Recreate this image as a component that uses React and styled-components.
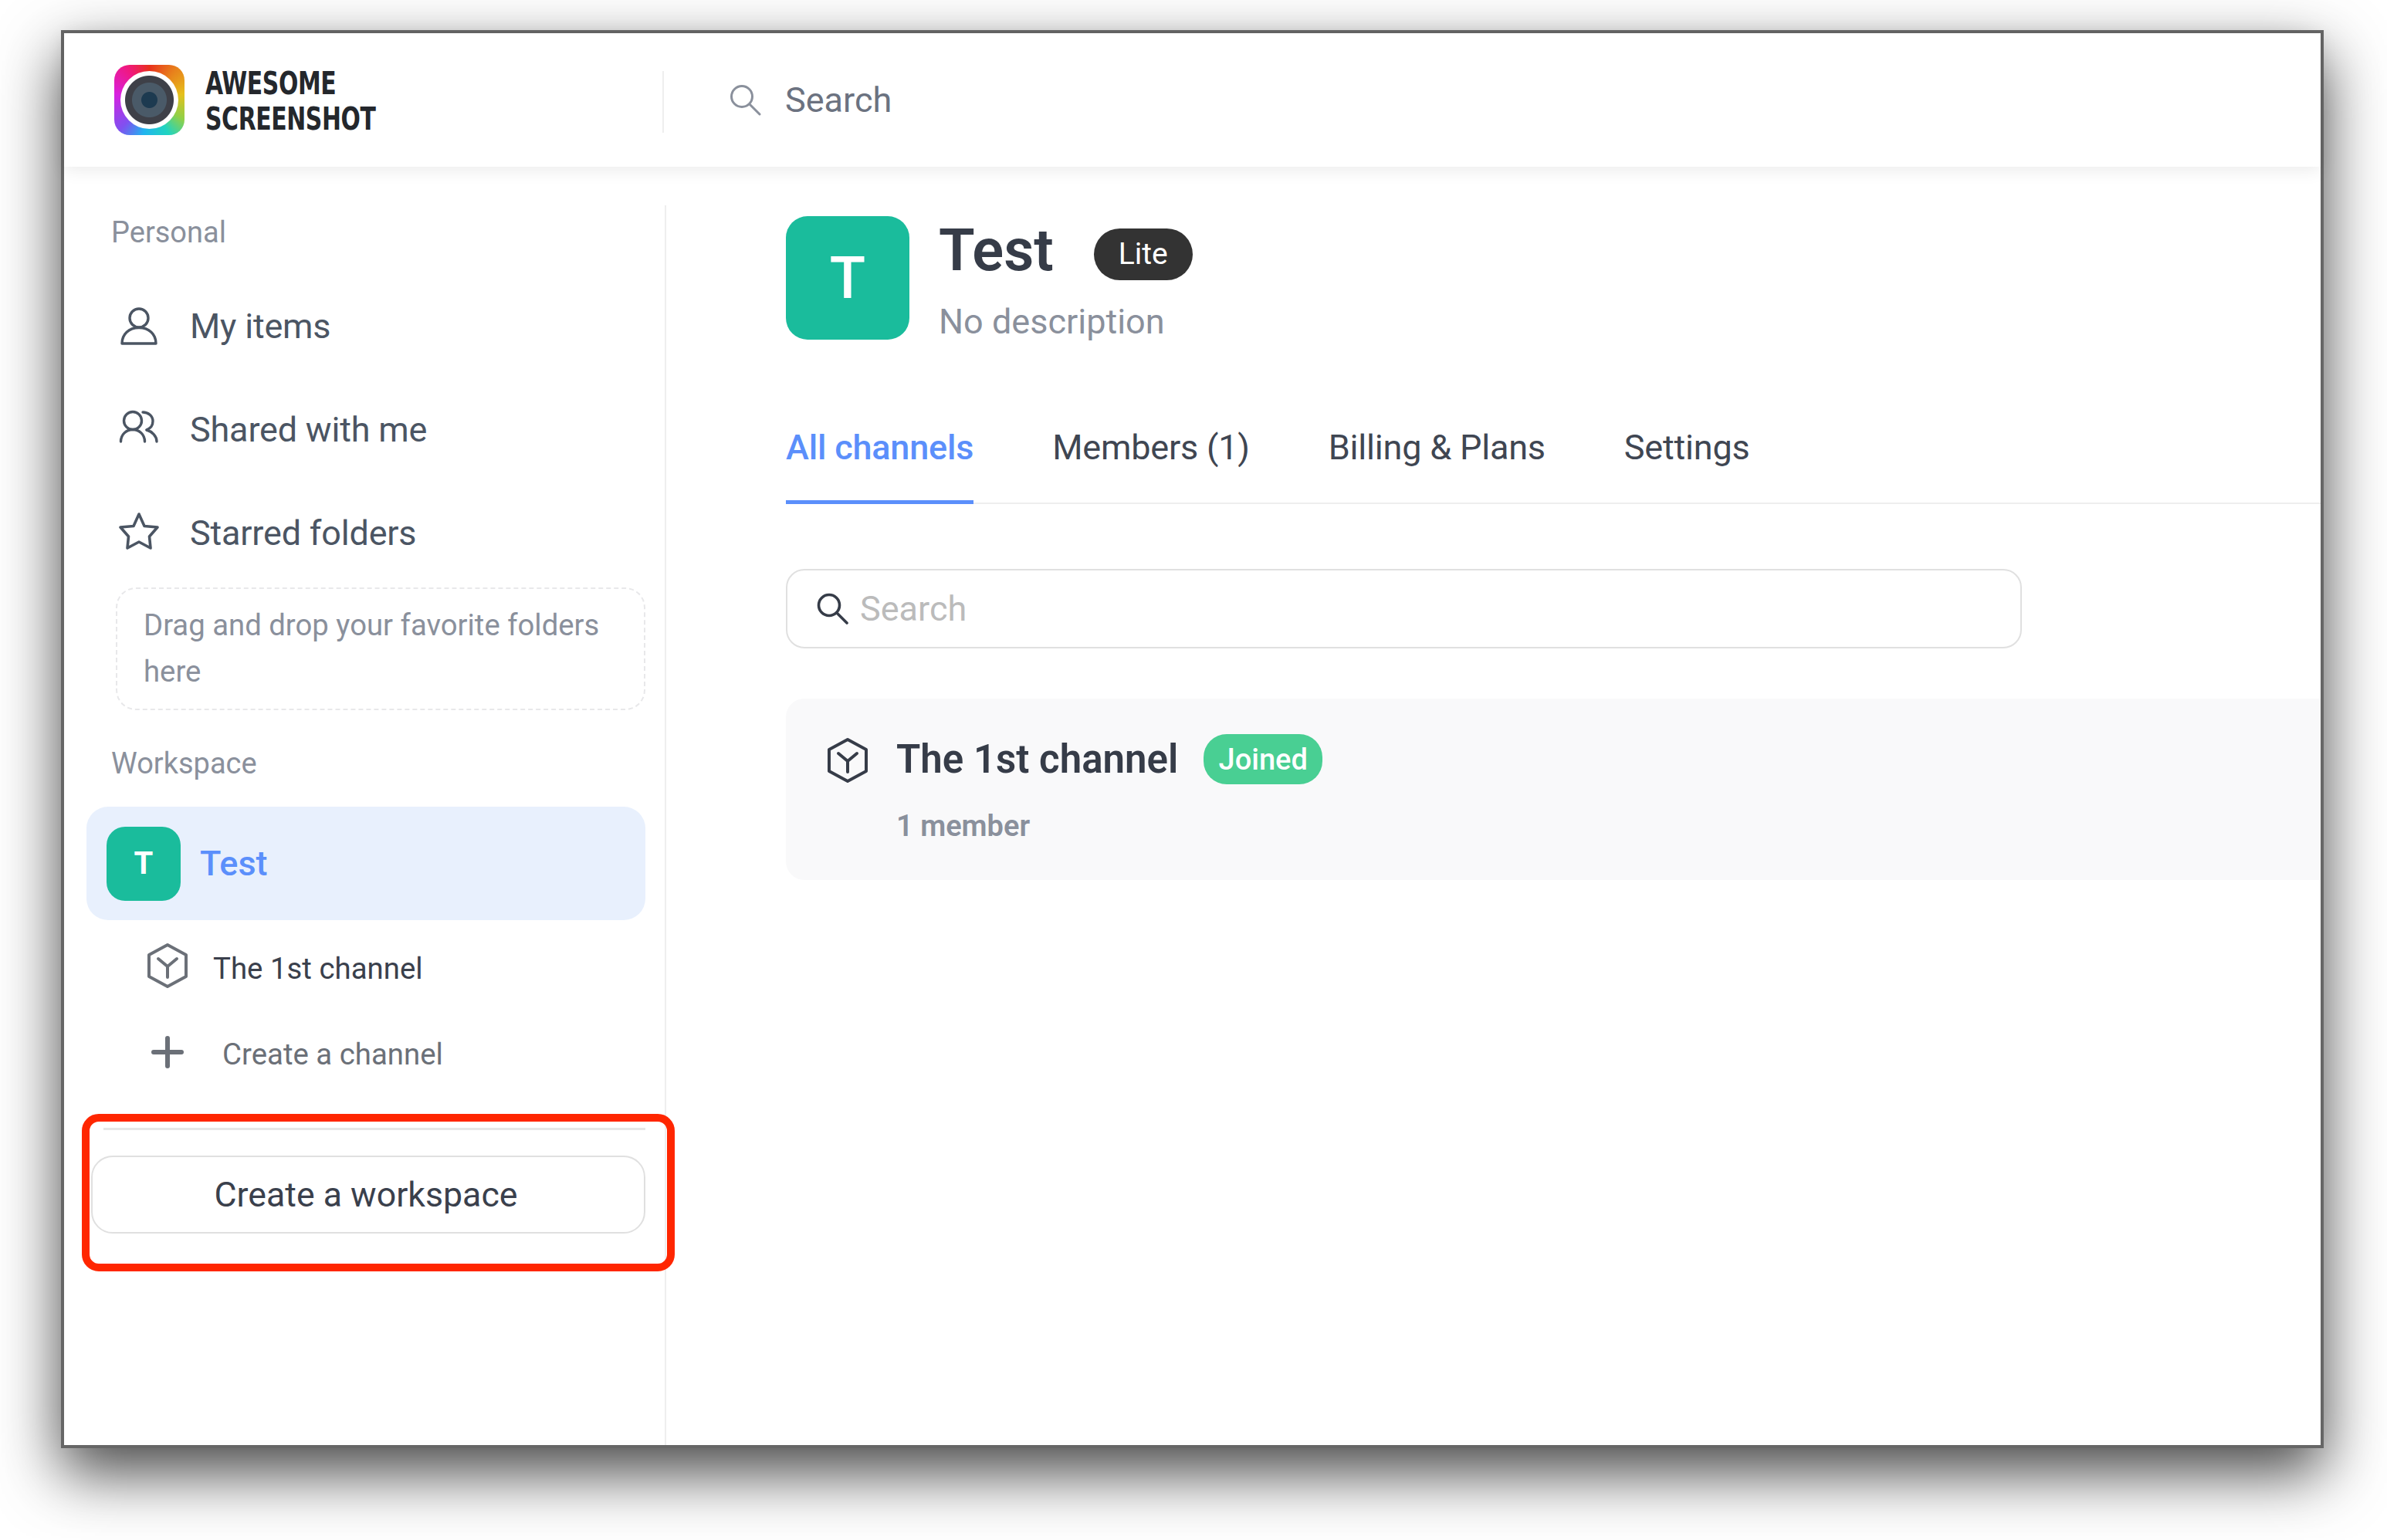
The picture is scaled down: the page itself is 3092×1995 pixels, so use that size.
import React from 'react'
import styled, { createGlobalStyle } from 'styled-components'

const GlobalStyle = createGlobalStyle`
    * { box-sizing: border-box; }
    html, body { margin: 0; padding: 0; background: #fff; }
    body { font-family: Roboto, "Liberation Sans", sans-serif; }
`

const Page = styled.div`
    width: 3092px;
    height: 1995px;
    padding: 39px 0 0 79px;
    background: #fff;
    overflow: hidden;
`
const Window = styled.div`
    width: 2931px;
    height: 1837px;
    border: 4px solid #666;
    background: #fff;
    display: flex;
    flex-direction: column;
    box-shadow: 0 32px 75px rgba(0, 0, 0, 0.72);
`
const Header = styled.header`
    height: 173px;
    flex: none;
    display: flex;
    align-items: center;
    position: relative;
    z-index: 1;
    background: #fff;
    box-shadow: 0 3px 22px rgba(0, 0, 0, 0.09);
`
const Brand = styled.div`
    width: 775px;
    padding-left: 65px;
    display: flex;
    align-items: center;
    gap: 27px;
`
const LogoMark = styled.div`
    width: 91px;
    height: 91px;
    border-radius: 20px;
    flex: none;
    display: flex;
    align-items: center;
    justify-content: center;
    background: conic-gradient(from 0deg, #e8301c, #e8801c 40deg, #e6c01c 80deg, #90d048 120deg, #20d4c0 150deg, #20b4f0 190deg, #8050f0 225deg, #d820e0 280deg, #f01880 325deg, #e8301c);
`
const LogoLens = styled.div`
    width: 75px;
    height: 75px;
    border-radius: 50%;
    background: radial-gradient(circle, #1d3a50 0 10px, #4a5a68 11px 22px, #3e4048 23px 31px, #fff 32px);
`
const BrandText = styled.div`
    font-family: "DejaVu Sans", sans-serif;
    font-stretch: condensed;
    font-weight: 700;
    font-size: 41px;
    line-height: 46px;
    letter-spacing: -0.5px;
    color: #24272c;
    padding-top: 3px;
    white-space: nowrap;
    transform: scaleX(0.81);
    transform-origin: left center;
`
const HeaderRule = styled.div`
    width: 2px;
    height: 80px;
    margin-top: 5px;
    background: #eee;
`
const HeaderSearch = styled.div`
    display: flex;
    align-items: center;
    gap: 31px;
    padding-left: 85px;
    font-size: 45px;
    color: #6b7280;
`
const Body = styled.div`
    flex: 1;
    display: flex;
    min-height: 0;
    padding-top: 50px;
`
const Sidebar = styled.aside`
    width: 780px;
    flex: none;
    position: relative;
    border-right: 2px solid #eee;
`
const SectionLabel = styled.div`
    height: 68px;
    margin-top: ${p => p.$top || 0}px;
    padding: 2px 0 0 61px;
    display: flex;
    align-items: center;
    font-size: 38px;
    color: #8a909c;
`
const NavRow = styled.div`
    height: 134px;
    display: flex;
    align-items: center;
    padding-left: 70px;
    gap: 39px;
    font-size: 45px;
    letter-spacing: -0.2px;
    color: #4b5563;
`
const NavIcon = styled.div`
    width: 54px;
    flex: none;
    display: flex;
    justify-content: center;
`
const NavList = styled.div`
    margin-top: 21px;
`
const DropZone = styled.div`
    width: 686px;
    height: 159px;
    margin: 4px 0 0 67px;
    padding: 17px 34px;
    border: 2px dashed #e8e8ea;
    border-radius: 26px;
    font-size: 38.300px;
    line-height: 60px;
    color: #8a909c;
`
const WorkspaceRow = styled.div`
    width: 724px;
    height: 147px;
    margin: 23px 0 0 29px;
    padding-left: 26px;
    display: flex;
    align-items: center;
    gap: 25px;
    border-radius: 28px;
    background: #e8f0fd;
    font-size: 45px;
    font-weight: 500;
    color: #5b8ffb;
`
const Avatar = styled.div`
    width: ${p => p.$size}px;
    height: ${p => p.$size}px;
    border-radius: ${p => p.$radius}px;
    flex: none;
    display: flex;
    align-items: center;
    justify-content: center;
    background: #1abc9c;
    color: #fff;
    font-size: ${p => p.$font}px;
    font-weight: ${p => p.$weight};
`
const SubRow = styled.div`
    height: 112px;
    display: flex;
    align-items: center;
    font-size: 38.400px;
    color: ${p => p.$muted ? '#6b7078' : '#3a404c'};
`
const SubLabel = styled.span`
    padding-top: ${p => p.$drop}px;
`
const SubList = styled.div`
    margin-top: 3px;
`
const SubIcon = styled.div`
    width: 54px;
    margin-left: 107px;
    margin-right: ${p => p.$gap}px;
    flex: none;
    display: flex;
    justify-content: center;
`
const SideRule = styled.div`
    width: 702px;
    height: 3px;
    margin: 42px 0 0 51px;
    background: #e6e6e6;
`
const WorkspaceButton = styled.button`
    display: block;
    width: 718px;
    height: 101px;
    margin: 33px 0 0 35px;
    padding: 0 6px 0 0;
    border: 2px solid #e0e0e0;
    border-radius: 28px;
    background: #fff;
    font-family: inherit;
    font-size: 44.700px;
    color: #3a404c;
`
const RedMark = styled.div`
    position: absolute;
    left: 23px;
    top: 1177px;
    width: 768px;
    height: 204px;
    border: 10px solid #ff2600;
    border-radius: 22px;
    pointer-events: none;
`
const Main = styled.main`
    flex: 1;
    min-width: 0;
    padding: 14px 0 0 155px;
`
const TitleRow = styled.div`
    display: flex;
    gap: 38px;
`
const TitleBlock = styled.div`
    display: flex;
    flex-direction: column;
`
const TitleLine = styled.div`
    height: 86px;
    padding-top: 2px;
    display: flex;
    align-items: center;
    gap: 52px;
`
const Title = styled.h1`
    margin: 0;
    font-size: 76px;
    font-weight: 600;
    color: #363c48;
`
const PlanBadge = styled.span`
    width: 128px;
    height: 67px;
    margin-top: 10px;
    border-radius: 34px;
    display: flex;
    align-items: center;
    justify-content: center;
    background: #333;
    color: #fff;
    font-size: 39px;
`
const Description = styled.div`
    margin-top: 24px;
    font-size: 45px;
    line-height: 54px;
    color: #8a909c;
`
const Tabs = styled.nav`
    height: 209px;
    display: flex;
    gap: 102px;
    border-bottom: 2px solid #eee;
`
const Tab = styled.div`
    height: 209px;
    padding-top: 110px;
    font-size: 45px;
    letter-spacing: -0.2px;
    line-height: 52px;
    font-weight: ${p => p.$active ? 500 : 400};
    color: ${p => p.$active ? '#5b8ffb' : '#3f4652'};
    border-bottom: ${p => p.$active ? '5px solid #5b8ffb' : 'none'};
`
const ChannelSearch = styled.div`
    width: 1601px;
    height: 103px;
    margin-top: 84px;
    padding-left: 38px;
    display: flex;
    align-items: center;
    gap: 15px;
    border: 2px solid #e0e0e0;
    border-radius: 24px;
    font-size: 45px;
    color: #bbb;
`
const ChannelCard = styled.div`
    height: 235px;
    margin-top: 65px;
    padding: 46px 0 0 53px;
    display: flex;
    gap: 36px;
    border-radius: 24px 0 0 24px;
    background: #f9f9fa;
`
const CubeSlot = styled.div`
    padding-top: 4px;
`
const ChannelInfo = styled.div`
    display: flex;
    flex-direction: column;
`
const ChannelHead = styled.div`
    height: 65px;
    display: flex;
    align-items: center;
    gap: 33px;
`
const ChannelName = styled.div`
    font-size: 51px;
    font-weight: 600;
    color: #363c48;
`
const JoinedBadge = styled.span`
    width: 154px;
    height: 65px;
    border-radius: 30px;
    display: flex;
    align-items: center;
    justify-content: center;
    background: #49cf93;
    color: #fff;
    font-size: 38px;
    font-weight: 500;
`
const MemberCount = styled.div`
    margin-top: 32px;
    font-size: 38px;
    font-weight: 600;
    color: #8a909c;
`

const PersonIcon = () => (
    <svg width="50" height="50" viewBox="0 0 50 50" fill="none" stroke="#4b5563" strokeWidth="3.4" strokeLinejoin="round">
        <circle cx="25" cy="15" r="12" />
        <path d="M3 48c0-12 9-20.500 22-20.500S47 36 47 48z" />
    </svg>
)
const PeopleIcon = () => (
    <svg width="52" height="50" viewBox="0 0 52 50" fill="none" stroke="#4b5563" strokeWidth="3.4" strokeLinecap="round" strokeLinejoin="round">
        <circle cx="18" cy="14" r="11.500" />
        <path d="M2.500 41c0-9 7-15.500 15.500-15.500S33.500 32 33.500 41" />
        <path d="M31 3c7 0 13 5 13 11.500S41 23.500 36 26" />
        <path d="M36 26c7 2 13 8 13 15" />
    </svg>
)
const StarIcon = () => (
    <svg width="54" height="52" viewBox="0 0 54 52" fill="none" stroke="#4b5563" strokeWidth="3.6" strokeLinejoin="round">
        <path d="M27 2l7 15.500 17 1.500-10.500 12L42 46l-15-8-15 8 1.500-15L3 19l17-1.500z" />
    </svg>
)
const CubeIcon = ({ color }) => (
    <svg width="54" height="60" viewBox="0 0 54 60" fill="none" stroke={color} strokeWidth="4" strokeLinejoin="round" strokeLinecap="round">
        <path d="M27 3l24 13v28L27 57 3 44V16z" />
        <path d="M15 21l12 10 12-10M27 31v14" />
    </svg>
)
const PlusIcon = () => (
    <svg width="42" height="42" viewBox="0 0 42 42" stroke="#6b7078" strokeWidth="6" strokeLinecap="round">
        <path d="M21 3v36M3 21h36" />
    </svg>
)
const SearchIcon = ({ color, width }) => (
    <svg width="41" height="41" viewBox="0 0 41 41" fill="none" stroke={color} strokeWidth={width} strokeLinecap="round">
        <circle cx="16" cy="16" r="13.500" />
        <path d="M26 26l13 13" />
    </svg>
)

const App = () => {
    return (
        <Page>
            <GlobalStyle />
            <Window>
                <Header>
                    <Brand>
                        <LogoMark><LogoLens /></LogoMark>
                        <BrandText>AWESOME<br />SCREENSHOT</BrandText>
                    </Brand>
                    <HeaderRule />
                    <HeaderSearch>
                        <SearchIcon color="#8a909c" width="3" />
                        Search
                    </HeaderSearch>
                </Header>
                <Body>
                    <Sidebar>
                        <SectionLabel>Personal</SectionLabel>
                        <NavList>
                            <NavRow><NavIcon><PersonIcon /></NavIcon>My items</NavRow>
                            <NavRow><NavIcon><PeopleIcon /></NavIcon>Shared with me</NavRow>
                            <NavRow><NavIcon><StarIcon /></NavIcon>Starred folders</NavRow>
                        </NavList>
                        <DropZone>Drag and drop your favorite folders here</DropZone>
                        <SectionLabel $top={34}>Workspace</SectionLabel>
                        <WorkspaceRow>
                            <Avatar $size={96} $radius={24} $font={40} $weight={700}>T</Avatar>
                            Test
                        </WorkspaceRow>
                        <SubList>
                            <SubRow>
                                <SubIcon $gap={32}><CubeIcon color="#6b7078" /></SubIcon>
                                <SubLabel $drop={6}>The 1st channel</SubLabel>
                            </SubRow>
                            <SubRow $muted>
                                <SubIcon $gap={44}><PlusIcon /></SubIcon>
                                <SubLabel $drop={4}>Create a channel</SubLabel>
                            </SubRow>
                        </SubList>
                        <SideRule />
                        <WorkspaceButton>Create a workspace</WorkspaceButton>
                        <RedMark />
                    </Sidebar>
                    <Main>
                        <TitleRow>
                            <Avatar $size={160} $radius={28} $font={76} $weight={500}>T</Avatar>
                            <TitleBlock>
                                <TitleLine>
                                    <Title>Test</Title>
                                    <PlanBadge>Lite</PlanBadge>
                                </TitleLine>
                                <Description>No description</Description>
                            </TitleBlock>
                        </TitleRow>
                        <Tabs>
                            <Tab $active>All channels</Tab>
                            <Tab>Members (1)</Tab>
                            <Tab>Billing &amp; Plans</Tab>
                            <Tab>Settings</Tab>
                        </Tabs>
                        <ChannelSearch>
                            <SearchIcon color="#363c48" width="3.6" />
                            Search
                        </ChannelSearch>
                        <ChannelCard>
                            <CubeSlot><CubeIcon color="#363c48" /></CubeSlot>
                            <ChannelInfo>
                                <ChannelHead>
                                    <ChannelName>The 1st channel</ChannelName>
                                    <JoinedBadge>Joined</JoinedBadge>
                                </ChannelHead>
                                <MemberCount>1 member</MemberCount>
                            </ChannelInfo>
                        </ChannelCard>
                    </Main>
                </Body>
            </Window>
        </Page>
    )
}

export default App
